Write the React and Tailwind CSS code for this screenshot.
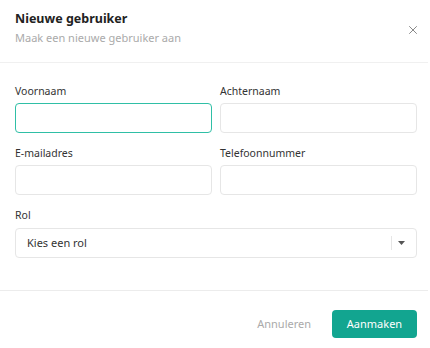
import { X } from 'lucide-react';

const Field = ({ label, focused = false, className = '' }) => (
  <div className={`flex flex-col ${className}`}>
    <label className="text-[10.5px] leading-[18px] text-[#333]">{label}</label>
    <input
      className={`mt-[3px] h-[30px] w-full rounded-[4px] border bg-white px-3 text-[11px] outline-none ${
        focused ? 'border-[#2fbfa6]' : 'border-[#e6e6e6]'
      }`}
    />
  </div>
);

const App = () => {
  return (
    <div
      className="h-[348px] w-[430px] overflow-hidden bg-white"
      style={{ fontFamily: '"Noto Sans", "Open Sans", sans-serif' }}
    >
      <div className="flex items-center justify-between pl-[15px] pr-[9px] pt-[9px] pb-[15px]">
        <div>
          <h2 className="text-[12.5px] font-bold leading-[20px] text-[#222]">Nieuwe gebruiker</h2>
          <p className="text-[11px] leading-[18px] text-[#aaa]">Maak een nieuwe gebruiker aan</p>
        </div>
        <button className="mt-[3px] flex h-4 w-4 items-center justify-center text-[#888]">
          <X className="h-[14px] w-[14px]" strokeWidth={1.7} />
        </button>
      </div>
      <div className="h-px w-[428px] bg-[#f0f0f0]" />

      <div className="pl-[15px] pr-[13px] pt-[19px] pb-[32px]">
        <div className="grid grid-cols-2 gap-x-2 gap-y-[11px]">
          <Field label="Voornaam" focused />
          <Field label="Achternaam" />
          <Field label="E-mailadres" />
          <Field label="Telefoonnummer" />
        </div>
        <div className="mt-[11px] flex flex-col">
          <label className="text-[10.5px] leading-[18px] text-[#333]">Rol</label>
          <div className="mt-[4px] flex h-[30px] items-center rounded-[4px] border border-[#e6e6e6] pl-[11px] pr-[11px]">
            <span className="flex-1 text-[11px] text-[#333]">Kies een rol</span>
            <span className="h-[14px] w-px bg-[#e6e6e6]" />
            <svg className="ml-[6px]" width="7" height="4" viewBox="0 0 7 4">
              <path d="M0 0 L7 0 L3.5 4 Z" fill="#555" />
            </svg>
          </div>
        </div>
      </div>

      <div className="h-px w-[428px] bg-[#ececec]" />
      <div className="flex items-center justify-end gap-[21px] pl-[15px] pr-[13px] pt-[19px]">
        <button className="text-[11px] text-[#aaa]">Annuleren</button>
        <button className="h-[28px] w-[85px] rounded-[4px] bg-[#12a590] text-[11px] text-white">
          Aanmaken
        </button>
      </div>
    </div>
  );
};

export default App;
